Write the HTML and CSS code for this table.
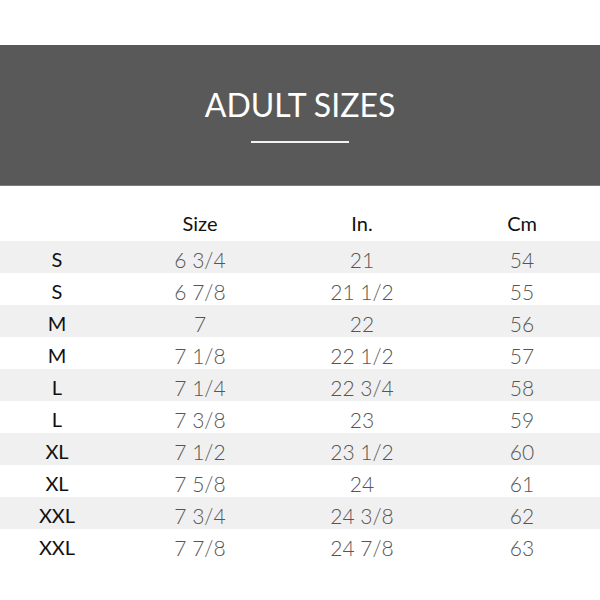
FILE: index.html
```html
<!DOCTYPE html>
<html>
<head>
<meta charset="utf-8">
<link rel="stylesheet" href="styles.css">
</head>
<body>
<div class="page">
  <header class="banner">
    <h1 class="title">ADULT SIZES</h1>
    <div class="rule"></div>
  </header>
  <div class="table">
    <div class="row head"><span></span><span>Size</span><span>In.</span><span class="cm">Cm</span></div>
    <div class="row shade"><span class="lbl">S</span><span>6 3/4</span><span>21</span><span class="cm">54</span></div>
    <div class="row"><span class="lbl">S</span><span>6 7/8</span><span>21 1/2</span><span class="cm">55</span></div>
    <div class="row shade"><span class="lbl">M</span><span>7</span><span>22</span><span class="cm">56</span></div>
    <div class="row"><span class="lbl">M</span><span>7 1/8</span><span>22 1/2</span><span class="cm">57</span></div>
    <div class="row shade"><span class="lbl">L</span><span>7 1/4</span><span>22 3/4</span><span class="cm">58</span></div>
    <div class="row"><span class="lbl">L</span><span>7 3/8</span><span>23</span><span class="cm">59</span></div>
    <div class="row shade"><span class="lbl">XL</span><span>7 1/2</span><span>23 1/2</span><span class="cm">60</span></div>
    <div class="row"><span class="lbl">XL</span><span>7 5/8</span><span>24</span><span class="cm">61</span></div>
    <div class="row shade"><span class="lbl">XXL</span><span>7 3/4</span><span>24 3/8</span><span class="cm">62</span></div>
    <div class="row"><span class="lbl">XXL</span><span>7 7/8</span><span>24 7/8</span><span class="cm">63</span></div>
  </div>
</div>
</body>
</html>
```
FILE: styles.css
```css
html, body {
  margin: 0;
  padding: 0;
  background: #ffffff;
}
.page {
  width: 600px;
  height: 600px;
  overflow: hidden;
  font-family: "Lato", "Open Sans", sans-serif;
  padding-top: 45px;
  box-sizing: border-box;
}
.banner {
  height: 141px;
  background: #595959;
  border-bottom: 1px solid #7a7a7a;
  display: flex;
  flex-direction: column;
  align-items: center;
  padding-top: 40px;
  box-sizing: border-box;
}
.title {
  margin: 0;
  font-size: 32px;
  font-weight: 400;
  color: #ffffff;
  line-height: 40px;
}
.rule {
  width: 98px;
  height: 2px;
  background: #f2f2f2;
  margin-top: 16px;
}
.table {
  display: flex;
  flex-direction: column;
}
.row {
  display: grid;
  grid-template-columns: 114px 172px 152px 162px;
  height: 32px;
  box-sizing: border-box;
  padding-top: 5px;
  justify-items: center;
  font-size: 21px;
  font-weight: 300;
  color: #555555;
  line-height: 27px;
}
.row .cm {
  padding-left: 6px;
}
.row.head {
  height: 55px;
  padding-top: 20px;
  line-height: 35px;
  color: #111111;
  font-weight: 400;
  font-size: 20px;
}
.row.shade {
  background: #f0f0f0;
}
.row .lbl {
  color: #111111;
  font-weight: 400;
  font-size: 20px;
}
```
